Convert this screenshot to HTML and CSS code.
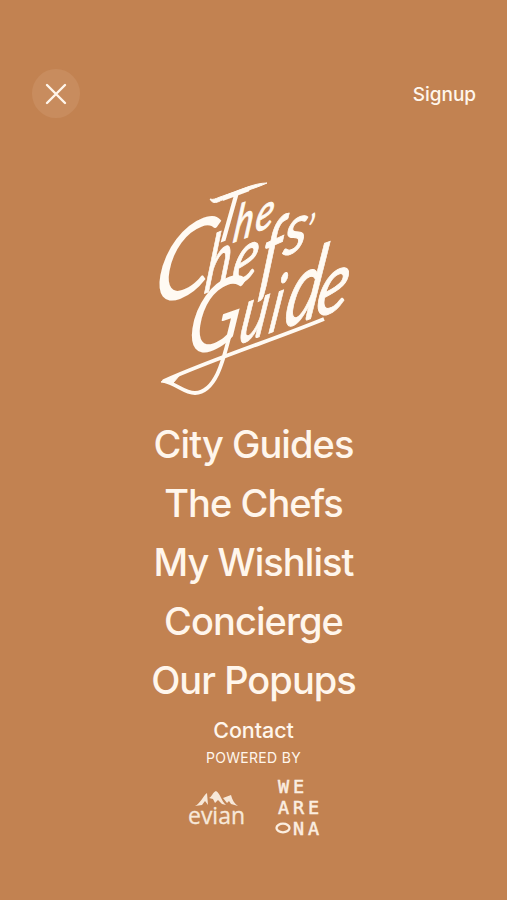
FILE: index.html
```html
<!DOCTYPE html>
<html lang="en">
<head>
<meta charset="utf-8">
<meta name="viewport" content="width=device-width">
<title>The Chefs' Guide</title>
<link rel="stylesheet" href="styles.css">
</head>
<body>
<header class="topbar">
  <button class="close" aria-label="Close">
    <svg width="24" height="24" viewBox="0 0 24 24"><path d="M3 3 21 21M21 3 3 21"/></svg>
  </button>
  <a class="signup">Signup</a>
</header>
<main class="content">
  <svg class="logo" width="200" height="220" viewBox="154 178 200 220">
    <path class="swash" d="M210 199C213 205 218 202 222 200C240 192 254 189 267 183C254 183 241 190 220 197C215 199 213 200 210 199Z"/>
    <g class="script">
      <text transform="matrix(.74 -.27 -.2 1 211 246)" font-size="69">T</text>
      <text class="bold" transform="matrix(.7 -.26 -.15 1 232 243)" font-size="52">h</text>
      <text class="bold" transform="matrix(.74 -.28 -.15 1 254 233)" font-size="51">e</text>
      <text transform="matrix(.88 -.32 -.18 1 150 309)" font-size="106">C</text>
      <text class="bold" transform="matrix(.6 -.24 -.14 1 203 294)" font-size="80">h</text>
      <text class="bold" transform="matrix(.72 -.28 -.16 1 230 287)" font-size="74">e</text>
      <text class="bold" transform="matrix(.66 -.3 -.14 1 257 291)" font-size="94">f</text>
      <text class="bold" transform="matrix(.86 -.34 -.12 1 282 257)" font-size="68">s</text>
      <text transform="matrix(.8 -.2 -.1 1 304 250)" font-size="48">’</text>
      <text transform="matrix(.82 -.29 -.15 1 184 360)" font-size="98">G</text>
      <text class="bold" transform="matrix(.64 -.24 -.18 1 237 345)" font-size="82">u</text>
      <text class="bold" transform="matrix(.64 -.24 -.18 1 267 334)" font-size="80">i</text>
      <text class="bold" transform="matrix(.66 -.24 -.18 1 282 329)" font-size="102">d</text>
      <text class="bold" transform="matrix(.8 -.3 -.15 1 314 319)" font-size="84">e</text>
    </g>
    <path class="tail" d="M231 330C224 357 217 392 195 393C184 393 177 384 164 381C218 357 270 341 324 319"/>
    <path class="swash" d="M161 382C168 378 174 376 179 376L173 383Z"/>
  </svg>
  <nav class="menu">
    <a class="city">City Guides</a>
    <a class="chefs">The Chefs</a>
    <a class="wishlist">My Wishlist</a>
    <a class="concierge">Concierge</a>
    <a class="popups">Our Popups</a>
  </nav>
  <a class="contact">Contact</a>
  <p class="powered">POWERED BY</p>
  <div class="partners">
    <svg class="evian" width="60" height="44" viewBox="0 0 60 44">
      <path d="M8 17C13 15 16 7 20 4L21 16 18 12 15 16ZM22 9C25 8 25 4 29 2C34 5 34 12 39 16L35 15 31 11 28 14 26 10ZM36 9L44 6C45 11 48 15 51 17L44 15 42 12 40 14Z"/>
      <text x="1" y="35" textLength="57" lengthAdjust="spacingAndGlyphs">evian</text>
    </svg>
    <svg class="ona" width="46" height="68" viewBox="0 0 46 68">
      <text x="3 18" y="16">WE</text>
      <text x="3 18 33" y="37">ARE</text>
      <ellipse cx="8" cy="51" rx="6.5" ry="4.3"/>
      <text x="18 33" y="58">NA</text>
    </svg>
  </div>
</main>
</body>
</html>
```
FILE: styles.css
```css
* { box-sizing: border-box; }
body {
  margin: 0;
  height: 900px;
  overflow: hidden;
  background: #c28251;
  color: #fff6ec;
  font-family: Inter, "Liberation Sans", sans-serif;
}
.topbar {
  display: flex;
  align-items: center;
  justify-content: space-between;
  height: 118px;
  padding: 69px 31px 0 32px;
}
.close {
  display: grid;
  place-items: center;
  width: 48px;
  height: 49px;
  padding: 0;
  border: 0;
  border-radius: 50%;
  background: #c88c5e;
}
.close path {
  fill: none;
  stroke: #fff6ec;
  stroke-width: 2.4;
  stroke-linecap: round;
}
.signup { padding-top: 2px; font-size: 19px; font-weight: 500; letter-spacing: -.05px; }
.content { display: flex; flex-direction: column; align-items: center; }
.logo { margin-top: 60px; overflow: visible; }
.script {
  fill: #fffaf3;
  font-family: Lato, sans-serif;
  font-style: italic;
}
.script .bold { stroke: #fffaf3; stroke-width: 1; }
.swash { fill: #fffaf3; stroke: #fffaf3; stroke-width: 1; }
.tail { fill: none; stroke: #fffaf3; stroke-width: 3.8; stroke-linejoin: round; }
.menu {
  display: flex;
  flex-direction: column;
  align-items: center;
  margin-top: 17px;
  font-size: 38px;
  font-weight: 500;
  line-height: 59px;
  letter-spacing: -.95px;
  white-space: nowrap;
}
.contact { font-size: 21.5px; font-weight: 500; line-height: 30px; margin-top: 5px; letter-spacing: -.1px; }
.powered { margin: 0; font-size: 14px; line-height: 25px; letter-spacing: .3px; }
.partners { display: flex; gap: 28px; margin-top: 7px; }
.evian { margin-top: 12px; fill: #f7e8d9; overflow: visible; }
.evian text { font: 500 24px "Open Sans", sans-serif; stroke: #f7e8d9; stroke-width: .3; }
.ona { overflow: visible; fill: #fbeee0; stroke: #fbeee0; stroke-width: .5; font: 400 18.5px "DejaVu Sans Mono", monospace; }
.ona ellipse { fill: none; stroke-width: 2.3; }
```
